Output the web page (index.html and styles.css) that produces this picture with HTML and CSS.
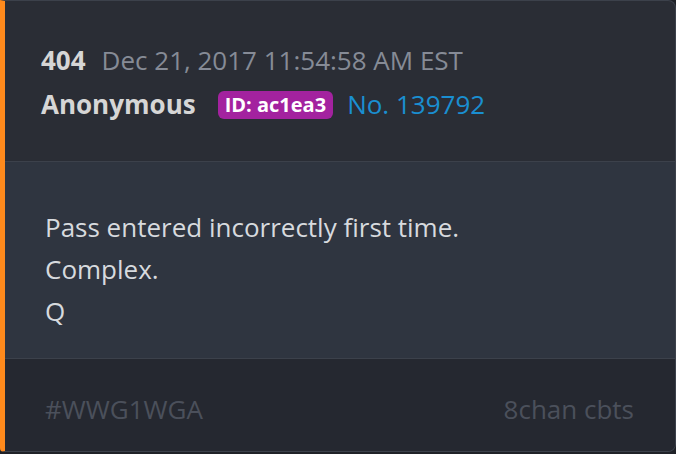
FILE: index.html
```html
<!DOCTYPE html>
<html lang="en">
<head>
    <meta charset="UTF-8">
    <meta name="viewport" content="width=device-width, initial-scale=1.0">
    <title>Post 139792</title>
    <link rel="stylesheet" href="styles.css">
</head>
<body>
    <div class="post">
        <div class="post-header">
            <div class="post-line">
                <span class="board">404</span>
                <span class="date">Dec 21, 2017 11:54:58 AM EST</span>
            </div>
            <div class="post-line">
                <span class="author">Anonymous</span>
                <span class="poster-id">ID: ac1ea3</span>
                <a class="post-no" href="#">No. 139792</a>
            </div>
        </div>
        <div class="post-body">
            <p>Pass entered incorrectly first time.</p>
            <p>Complex.</p>
            <p>Q</p>
        </div>
        <div class="post-footer">
            <span class="tag">#WWG1WGA</span>
            <span class="source">8chan cbts</span>
        </div>
    </div>
</body>
</html>
```

FILE: styles.css
```css
body {
    margin: 0;
    padding: 0;
    background-color: #1f2228;
    font-family: 'Open Sans', 'Liberation Sans', Arial, sans-serif;
    font-size: 26px;
}

.post {
    height: 450px;
    display: flex;
    flex-direction: column;
    border: 1px solid #3c414b;
    border-left: 5px solid #ff8a1c;
    border-radius: 0 8px 8px 4px;
    overflow: hidden;
    background-color: #2a2d35;
}

.post-header {
    padding: 40px 40px 37px 36px;
    border-bottom: 1px solid #3c414b;
    display: flex;
    flex-direction: column;
    gap: 5px;
}

.post-line {
    display: flex;
    align-items: center;
    line-height: 39px;
}

.board {
    font-weight: 700;
    color: #d6d6d6;
    margin-right: 16px;
}

.date {
    color: #868b96;
}

.author {
    font-weight: 700;
    color: #d6d6d6;
    margin-right: 22px;
}

.poster-id {
    background-color: #a3229f;
    color: #ffffff;
    font-weight: 700;
    font-size: 20px;
    line-height: 28px;
    padding: 0 7px;
    border-radius: 6px;
    margin-right: 14px;
}

.post-no {
    color: #1a8fd1;
    text-decoration: none;
}

.post-body {
    padding: 44px 40px 26px 40px;
    background-color: #2f3540;
    color: #d7dade;
    border-bottom: 1px solid #3c414b;
}

.post-body p {
    margin: 0;
    line-height: 42px;
}

.post-footer {
    flex: 1;
    display: flex;
    justify-content: space-between;
    padding: 31px 41px 0 40px;
    background-color: #252830;
    line-height: 39px;
    color: #4b505b;
}
```
